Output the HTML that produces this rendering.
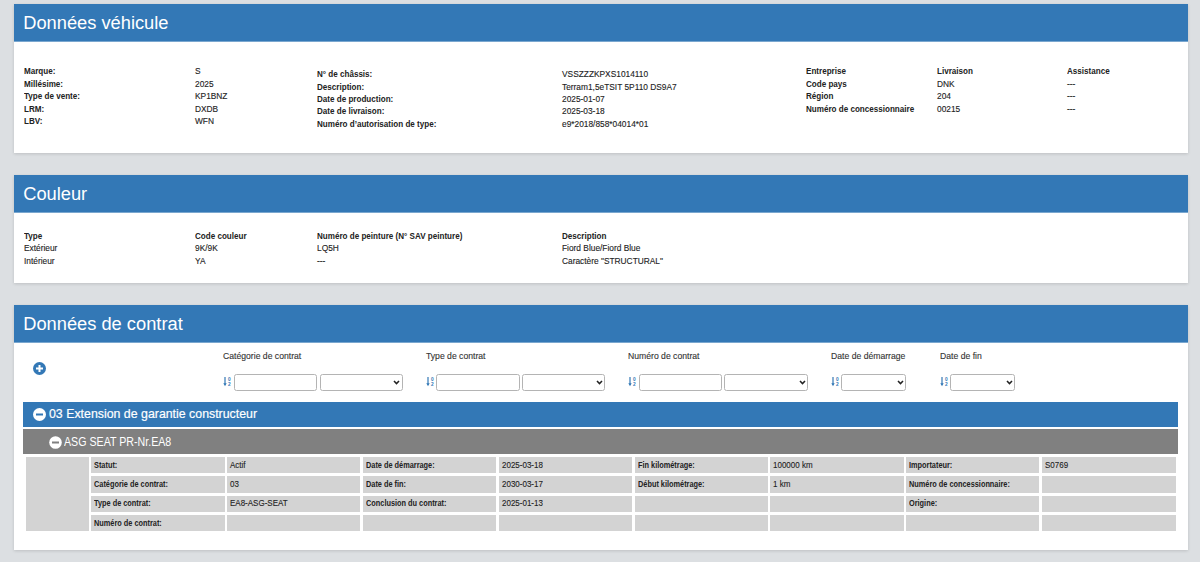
<!DOCTYPE html>
<html><head><meta charset="utf-8"><style>
html,body{margin:0;padding:0;}
body{width:1200px;height:562px;overflow:hidden;background:#dcdfe2;position:relative;font-family:"Liberation Sans",sans-serif;}
.r{position:absolute;}
.t{position:absolute;white-space:nowrap;}
</style></head><body>
<div class="r" style="left:14px;top:4px;width:1174px;height:149px;background:#fff;box-shadow:0 1px 3px rgba(0,0,0,0.14);"></div>
<div class="r" style="left:14px;top:4px;width:1174px;height:37px;background:#3378b6;"></div>
<div class="r" style="left:14px;top:41px;width:1174px;height:1px;background:rgba(51,120,182,0.65);"></div>
<div class="t" style="left:23.2px;top:14px;font-size:18.3px;line-height:18.3px;color:#fff;">Données véhicule</div>
<div class="r" style="left:14px;top:175px;width:1174px;height:108px;background:#fff;box-shadow:0 1px 3px rgba(0,0,0,0.14);"></div>
<div class="r" style="left:14px;top:175px;width:1174px;height:37px;background:#3378b6;"></div>
<div class="r" style="left:14px;top:212px;width:1174px;height:1px;background:rgba(51,120,182,0.65);"></div>
<div class="t" style="left:23.2px;top:185px;font-size:18.3px;line-height:18.3px;color:#fff;">Couleur</div>
<div class="r" style="left:14px;top:305px;width:1174px;height:245px;background:#fff;box-shadow:0 1px 3px rgba(0,0,0,0.14);"></div>
<div class="r" style="left:14px;top:305px;width:1174px;height:37px;background:#3378b6;"></div>
<div class="r" style="left:14px;top:342px;width:1174px;height:1px;background:rgba(51,120,182,0.65);"></div>
<div class="t" style="left:23.2px;top:315px;font-size:18.3px;line-height:18.3px;color:#fff;">Données de contrat</div>
<div class="t" style="left:23.5px;top:67px;font-size:8.9px;line-height:8.9px;font-weight:bold;color:#222;transform:scaleX(0.91);transform-origin:0 0;">Marque:</div>
<div class="t" style="left:194.5px;top:67px;font-size:8.9px;line-height:8.9px;-webkit-text-stroke:0.12px currentColor;color:#222;transform:scaleX(0.94);transform-origin:0 0;">S</div>
<div class="t" style="left:23.5px;top:80px;font-size:8.9px;line-height:8.9px;font-weight:bold;color:#222;transform:scaleX(0.91);transform-origin:0 0;">Millésime:</div>
<div class="t" style="left:194.5px;top:80px;font-size:8.9px;line-height:8.9px;-webkit-text-stroke:0.12px currentColor;color:#222;transform:scaleX(0.94);transform-origin:0 0;">2025</div>
<div class="t" style="left:23.5px;top:92px;font-size:8.9px;line-height:8.9px;font-weight:bold;color:#222;transform:scaleX(0.91);transform-origin:0 0;">Type de vente:</div>
<div class="t" style="left:194.5px;top:92px;font-size:8.9px;line-height:8.9px;-webkit-text-stroke:0.12px currentColor;color:#222;transform:scaleX(0.94);transform-origin:0 0;">KP1BNZ</div>
<div class="t" style="left:23.5px;top:105px;font-size:8.9px;line-height:8.9px;font-weight:bold;color:#222;transform:scaleX(0.91);transform-origin:0 0;">LRM:</div>
<div class="t" style="left:194.5px;top:105px;font-size:8.9px;line-height:8.9px;-webkit-text-stroke:0.12px currentColor;color:#222;transform:scaleX(0.94);transform-origin:0 0;">DXDB</div>
<div class="t" style="left:23.5px;top:117px;font-size:8.9px;line-height:8.9px;font-weight:bold;color:#222;transform:scaleX(0.91);transform-origin:0 0;">LBV:</div>
<div class="t" style="left:194.5px;top:117px;font-size:8.9px;line-height:8.9px;-webkit-text-stroke:0.12px currentColor;color:#222;transform:scaleX(0.94);transform-origin:0 0;">WFN</div>
<div class="t" style="left:317px;top:70px;font-size:8.9px;line-height:8.9px;font-weight:bold;color:#222;transform:scaleX(0.91);transform-origin:0 0;">N° de châssis:</div>
<div class="t" style="left:561.75px;top:70px;font-size:8.9px;line-height:8.9px;-webkit-text-stroke:0.12px currentColor;color:#222;transform:scaleX(0.94);transform-origin:0 0;">VSSZZZKPXS1014110</div>
<div class="t" style="left:317px;top:83px;font-size:8.9px;line-height:8.9px;font-weight:bold;color:#222;transform:scaleX(0.91);transform-origin:0 0;">Description:</div>
<div class="t" style="left:561.75px;top:83px;font-size:8.9px;line-height:8.9px;-webkit-text-stroke:0.12px currentColor;color:#222;transform:scaleX(0.94);transform-origin:0 0;">Terram1,5eTSIT 5P110 DS9A7</div>
<div class="t" style="left:317px;top:95px;font-size:8.9px;line-height:8.9px;font-weight:bold;color:#222;transform:scaleX(0.91);transform-origin:0 0;">Date de production:</div>
<div class="t" style="left:561.75px;top:95px;font-size:8.9px;line-height:8.9px;-webkit-text-stroke:0.12px currentColor;color:#222;transform:scaleX(0.94);transform-origin:0 0;">2025-01-07</div>
<div class="t" style="left:317px;top:107px;font-size:8.9px;line-height:8.9px;font-weight:bold;color:#222;transform:scaleX(0.91);transform-origin:0 0;">Date de livraison:</div>
<div class="t" style="left:561.75px;top:107px;font-size:8.9px;line-height:8.9px;-webkit-text-stroke:0.12px currentColor;color:#222;transform:scaleX(0.94);transform-origin:0 0;">2025-03-18</div>
<div class="t" style="left:317px;top:120px;font-size:8.9px;line-height:8.9px;font-weight:bold;color:#222;transform:scaleX(0.91);transform-origin:0 0;">Numéro d’autorisation de type:</div>
<div class="t" style="left:561.75px;top:120px;font-size:8.9px;line-height:8.9px;-webkit-text-stroke:0.12px currentColor;color:#222;transform:scaleX(0.94);transform-origin:0 0;">e9*2018/858*04014*01</div>
<div class="t" style="left:806.25px;top:67px;font-size:8.9px;line-height:8.9px;font-weight:bold;color:#222;transform:scaleX(0.91);transform-origin:0 0;">Entreprise</div>
<div class="t" style="left:937px;top:67px;font-size:8.9px;line-height:8.9px;font-weight:bold;color:#222;transform:scaleX(0.91);transform-origin:0 0;">Livraison</div>
<div class="t" style="left:1067px;top:67px;font-size:8.9px;line-height:8.9px;font-weight:bold;color:#222;transform:scaleX(0.91);transform-origin:0 0;">Assistance</div>
<div class="t" style="left:806.25px;top:80px;font-size:8.9px;line-height:8.9px;font-weight:bold;color:#222;transform:scaleX(0.91);transform-origin:0 0;">Code pays</div>
<div class="t" style="left:937px;top:80px;font-size:8.9px;line-height:8.9px;-webkit-text-stroke:0.12px currentColor;color:#222;transform:scaleX(0.94);transform-origin:0 0;">DNK</div>
<div class="t" style="left:1067px;top:80px;font-size:8.9px;line-height:8.9px;-webkit-text-stroke:0.12px currentColor;color:#222;transform:scaleX(0.94);transform-origin:0 0;">---</div>
<div class="t" style="left:806.25px;top:92px;font-size:8.9px;line-height:8.9px;font-weight:bold;color:#222;transform:scaleX(0.91);transform-origin:0 0;">Région</div>
<div class="t" style="left:937px;top:92px;font-size:8.9px;line-height:8.9px;-webkit-text-stroke:0.12px currentColor;color:#222;transform:scaleX(0.94);transform-origin:0 0;">204</div>
<div class="t" style="left:1067px;top:92px;font-size:8.9px;line-height:8.9px;-webkit-text-stroke:0.12px currentColor;color:#222;transform:scaleX(0.94);transform-origin:0 0;">---</div>
<div class="t" style="left:806.25px;top:105px;font-size:8.9px;line-height:8.9px;font-weight:bold;color:#222;transform:scaleX(0.91);transform-origin:0 0;">Numéro de concessionnaire</div>
<div class="t" style="left:937px;top:105px;font-size:8.9px;line-height:8.9px;-webkit-text-stroke:0.12px currentColor;color:#222;transform:scaleX(0.94);transform-origin:0 0;">00215</div>
<div class="t" style="left:1067px;top:105px;font-size:8.9px;line-height:8.9px;-webkit-text-stroke:0.12px currentColor;color:#222;transform:scaleX(0.94);transform-origin:0 0;">---</div>
<div class="t" style="left:23.5px;top:232px;font-size:8.9px;line-height:8.9px;font-weight:bold;color:#222;transform:scaleX(0.91);transform-origin:0 0;">Type</div>
<div class="t" style="left:194.5px;top:232px;font-size:8.9px;line-height:8.9px;font-weight:bold;color:#222;transform:scaleX(0.91);transform-origin:0 0;">Code couleur</div>
<div class="t" style="left:317.3px;top:232px;font-size:8.9px;line-height:8.9px;font-weight:bold;color:#222;transform:scaleX(0.91);transform-origin:0 0;">Numéro de peinture (N° SAV peinture)</div>
<div class="t" style="left:561.7px;top:232px;font-size:8.9px;line-height:8.9px;font-weight:bold;color:#222;transform:scaleX(0.91);transform-origin:0 0;">Description</div>
<div class="t" style="left:23.5px;top:244px;font-size:8.9px;line-height:8.9px;-webkit-text-stroke:0.12px currentColor;color:#222;transform:scaleX(0.94);transform-origin:0 0;">Extérieur</div>
<div class="t" style="left:194.5px;top:244px;font-size:8.9px;line-height:8.9px;-webkit-text-stroke:0.12px currentColor;color:#222;transform:scaleX(0.94);transform-origin:0 0;">9K/9K</div>
<div class="t" style="left:317.3px;top:244px;font-size:8.9px;line-height:8.9px;-webkit-text-stroke:0.12px currentColor;color:#222;transform:scaleX(0.94);transform-origin:0 0;">LQ5H</div>
<div class="t" style="left:561.7px;top:244px;font-size:8.9px;line-height:8.9px;-webkit-text-stroke:0.12px currentColor;color:#222;transform:scaleX(0.94);transform-origin:0 0;">Fiord Blue/Fiord Blue</div>
<div class="t" style="left:23.5px;top:257px;font-size:8.9px;line-height:8.9px;-webkit-text-stroke:0.12px currentColor;color:#222;transform:scaleX(0.94);transform-origin:0 0;">Intérieur</div>
<div class="t" style="left:194.5px;top:257px;font-size:8.9px;line-height:8.9px;-webkit-text-stroke:0.12px currentColor;color:#222;transform:scaleX(0.94);transform-origin:0 0;">YA</div>
<div class="t" style="left:317.3px;top:257px;font-size:8.9px;line-height:8.9px;-webkit-text-stroke:0.12px currentColor;color:#222;transform:scaleX(0.94);transform-origin:0 0;">---</div>
<div class="t" style="left:561.7px;top:257px;font-size:8.9px;line-height:8.9px;-webkit-text-stroke:0.12px currentColor;color:#222;transform:scaleX(0.94);transform-origin:0 0;">Caractère "STRUCTURAL"</div>
<svg class="r" style="left:32.5px;top:361.5px" width="13" height="13" viewBox="0 0 13 13"><circle cx="6.5" cy="6.5" r="6.5" fill="#3378b6"/><rect x="3" y="5.5" width="7" height="2" fill="#fff"/><rect x="5.5" y="3" width="2" height="7" fill="#fff"/></svg>
<div class="t" style="left:223px;top:351px;font-size:9.6px;line-height:9.6px;-webkit-text-stroke:0.12px currentColor;color:#333;transform:scaleX(0.9);transform-origin:0 0;">Catégorie de contrat</div>
<svg class="r" style="left:223px;top:377px" width="9" height="10" viewBox="0 0 9 10"><path d="M2 0V7.5" stroke="#3378b6" stroke-width="1.2"/><path d="M0.3 6.3L2 9.2L3.7 6.3Z" fill="#3378b6"/><text x="4.9" y="4" font-size="4.8" font-weight="bold" font-family="Liberation Sans" fill="#3378b6">0</text><text x="4.9" y="9.2" font-size="4.8" font-weight="bold" font-family="Liberation Sans" fill="#3378b6">2</text></svg>
<div class="t" style="left:426.3px;top:351px;font-size:9.6px;line-height:9.6px;-webkit-text-stroke:0.12px currentColor;color:#333;transform:scaleX(0.9);transform-origin:0 0;">Type de contrat</div>
<svg class="r" style="left:426.3px;top:377px" width="9" height="10" viewBox="0 0 9 10"><path d="M2 0V7.5" stroke="#3378b6" stroke-width="1.2"/><path d="M0.3 6.3L2 9.2L3.7 6.3Z" fill="#3378b6"/><text x="4.9" y="4" font-size="4.8" font-weight="bold" font-family="Liberation Sans" fill="#3378b6">0</text><text x="4.9" y="9.2" font-size="4.8" font-weight="bold" font-family="Liberation Sans" fill="#3378b6">2</text></svg>
<div class="t" style="left:628px;top:351px;font-size:9.6px;line-height:9.6px;-webkit-text-stroke:0.12px currentColor;color:#333;transform:scaleX(0.9);transform-origin:0 0;">Numéro de contrat</div>
<svg class="r" style="left:628px;top:377px" width="9" height="10" viewBox="0 0 9 10"><path d="M2 0V7.5" stroke="#3378b6" stroke-width="1.2"/><path d="M0.3 6.3L2 9.2L3.7 6.3Z" fill="#3378b6"/><text x="4.9" y="4" font-size="4.8" font-weight="bold" font-family="Liberation Sans" fill="#3378b6">0</text><text x="4.9" y="9.2" font-size="4.8" font-weight="bold" font-family="Liberation Sans" fill="#3378b6">2</text></svg>
<div class="t" style="left:830.8px;top:351px;font-size:9.6px;line-height:9.6px;-webkit-text-stroke:0.12px currentColor;color:#333;transform:scaleX(0.9);transform-origin:0 0;">Date de démarrage</div>
<svg class="r" style="left:830.8px;top:377px" width="9" height="10" viewBox="0 0 9 10"><path d="M2 0V7.5" stroke="#3378b6" stroke-width="1.2"/><path d="M0.3 6.3L2 9.2L3.7 6.3Z" fill="#3378b6"/><text x="4.9" y="4" font-size="4.8" font-weight="bold" font-family="Liberation Sans" fill="#3378b6">0</text><text x="4.9" y="9.2" font-size="4.8" font-weight="bold" font-family="Liberation Sans" fill="#3378b6">2</text></svg>
<div class="t" style="left:940px;top:351px;font-size:9.6px;line-height:9.6px;-webkit-text-stroke:0.12px currentColor;color:#333;transform:scaleX(0.9);transform-origin:0 0;">Date de fin</div>
<svg class="r" style="left:940px;top:377px" width="9" height="10" viewBox="0 0 9 10"><path d="M2 0V7.5" stroke="#3378b6" stroke-width="1.2"/><path d="M0.3 6.3L2 9.2L3.7 6.3Z" fill="#3378b6"/><text x="4.9" y="4" font-size="4.8" font-weight="bold" font-family="Liberation Sans" fill="#3378b6">0</text><text x="4.9" y="9.2" font-size="4.8" font-weight="bold" font-family="Liberation Sans" fill="#3378b6">2</text></svg>
<div class="r" style="left:234.3px;top:374.2px;width:83.0px;height:16.600000000000023px;background:#fff;border:1.3px solid #b4b4b4;border-radius:2.5px;box-sizing:border-box;"></div>
<div class="r" style="left:319.5px;top:374.2px;width:83.30000000000001px;height:16.600000000000023px;background:#fff;border:1.3px solid #b4b4b4;border-radius:2.5px;box-sizing:border-box;"></div>
<svg class="r" style="left:393.3px;top:380.2px" width="7" height="5" viewBox="0 0 7 5"><path d="M1 1L3.5 3.6L6 1" stroke="#222" stroke-width="1.5" fill="none"/></svg>
<div class="r" style="left:436.3px;top:374.2px;width:83.69999999999999px;height:16.600000000000023px;background:#fff;border:1.3px solid #b4b4b4;border-radius:2.5px;box-sizing:border-box;"></div>
<div class="r" style="left:522.2px;top:374.2px;width:83.29999999999995px;height:16.600000000000023px;background:#fff;border:1.3px solid #b4b4b4;border-radius:2.5px;box-sizing:border-box;"></div>
<svg class="r" style="left:596.0px;top:380.2px" width="7" height="5" viewBox="0 0 7 5"><path d="M1 1L3.5 3.6L6 1" stroke="#222" stroke-width="1.5" fill="none"/></svg>
<div class="r" style="left:638.7px;top:374.2px;width:83.0px;height:16.600000000000023px;background:#fff;border:1.3px solid #b4b4b4;border-radius:2.5px;box-sizing:border-box;"></div>
<div class="r" style="left:724.2px;top:374.2px;width:84.09999999999991px;height:16.600000000000023px;background:#fff;border:1.3px solid #b4b4b4;border-radius:2.5px;box-sizing:border-box;"></div>
<svg class="r" style="left:798.8px;top:380.2px" width="7" height="5" viewBox="0 0 7 5"><path d="M1 1L3.5 3.6L6 1" stroke="#222" stroke-width="1.5" fill="none"/></svg>
<div class="r" style="left:841.3px;top:374.2px;width:65.0px;height:16.600000000000023px;background:#fff;border:1.3px solid #b4b4b4;border-radius:2.5px;box-sizing:border-box;"></div>
<svg class="r" style="left:896.8px;top:380.2px" width="7" height="5" viewBox="0 0 7 5"><path d="M1 1L3.5 3.6L6 1" stroke="#222" stroke-width="1.5" fill="none"/></svg>
<div class="r" style="left:950px;top:374.2px;width:65px;height:16.600000000000023px;background:#fff;border:1.3px solid #b4b4b4;border-radius:2.5px;box-sizing:border-box;"></div>
<svg class="r" style="left:1005.5px;top:380.2px" width="7" height="5" viewBox="0 0 7 5"><path d="M1 1L3.5 3.6L6 1" stroke="#222" stroke-width="1.5" fill="none"/></svg>
<div class="r" style="left:23px;top:402px;width:1155px;height:25px;background:#3378b6;"></div>
<svg class="r" style="left:33px;top:408px" width="13" height="13" viewBox="0 0 13 13"><circle cx="6.5" cy="6.5" r="6.5" fill="#fff"/><rect x="3" y="5.5" width="7" height="2" fill="#3378b6"/></svg>
<div class="t" style="left:48.5px;top:407px;font-size:13.5px;line-height:13.5px;color:#fff;-webkit-text-stroke:0.2px #fff;transform:scaleX(0.915);transform-origin:0 0;">03 Extension de garantie constructeur</div>
<div class="r" style="left:23px;top:429px;width:1155px;height:25px;background:#808080;"></div>
<svg class="r" style="left:48.5px;top:435.7px" width="13" height="13" viewBox="0 0 13 13"><circle cx="6.5" cy="6.5" r="6.3" fill="#fff"/><rect x="3" y="5.5" width="7" height="2" fill="#808080"/></svg>
<div class="t" style="left:64.2px;top:436px;font-size:12.1px;line-height:12.1px;color:#fff;transform:scaleX(0.88);transform-origin:0 0;">ASG SEAT PR-Nr.EA8</div>
<div class="r" style="left:26.2px;top:457.2px;width:62.8px;height:74.19999999999999px;background:#d3d3d3;"></div>
<div class="r" style="left:91.4px;top:457.2px;width:133.2px;height:15.800000000000011px;background:#d3d3d3;"></div>
<div class="t" style="left:94.4px;top:461px;font-size:9.2px;line-height:9.2px;font-weight:bold;color:#222;transform:scaleX(0.8);transform-origin:0 0;">Statut:</div>
<div class="r" style="left:227.2px;top:457.2px;width:133.2px;height:15.800000000000011px;background:#d3d3d3;"></div>
<div class="t" style="left:230.2px;top:461px;font-size:9.2px;line-height:9.2px;-webkit-text-stroke:0.12px currentColor;color:#222;transform:scaleX(0.87);transform-origin:0 0;">Actif</div>
<div class="r" style="left:363.0px;top:457.2px;width:133.2px;height:15.800000000000011px;background:#d3d3d3;"></div>
<div class="t" style="left:366.0px;top:461px;font-size:9.2px;line-height:9.2px;font-weight:bold;color:#222;transform:scaleX(0.8);transform-origin:0 0;">Date de démarrage:</div>
<div class="r" style="left:498.8px;top:457.2px;width:133.2px;height:15.800000000000011px;background:#d3d3d3;"></div>
<div class="t" style="left:501.8px;top:461px;font-size:9.2px;line-height:9.2px;-webkit-text-stroke:0.12px currentColor;color:#222;transform:scaleX(0.87);transform-origin:0 0;">2025-03-18</div>
<div class="r" style="left:634.6px;top:457.2px;width:133.19999999999993px;height:15.800000000000011px;background:#d3d3d3;"></div>
<div class="t" style="left:637.6px;top:461px;font-size:9.2px;line-height:9.2px;font-weight:bold;color:#222;transform:scaleX(0.8);transform-origin:0 0;">Fin kilométrage:</div>
<div class="r" style="left:770.4px;top:457.2px;width:133.20000000000005px;height:15.800000000000011px;background:#d3d3d3;"></div>
<div class="t" style="left:773.4px;top:461px;font-size:9.2px;line-height:9.2px;-webkit-text-stroke:0.12px currentColor;color:#222;transform:scaleX(0.87);transform-origin:0 0;">100000 km</div>
<div class="r" style="left:906.2px;top:457.2px;width:133.20000000000005px;height:15.800000000000011px;background:#d3d3d3;"></div>
<div class="t" style="left:909.2px;top:461px;font-size:9.2px;line-height:9.2px;font-weight:bold;color:#222;transform:scaleX(0.8);transform-origin:0 0;">Importateur:</div>
<div class="r" style="left:1042.0px;top:457.2px;width:134.0px;height:15.800000000000011px;background:#d3d3d3;"></div>
<div class="t" style="left:1045.0px;top:461px;font-size:9.2px;line-height:9.2px;-webkit-text-stroke:0.12px currentColor;color:#222;transform:scaleX(0.87);transform-origin:0 0;">S0769</div>
<div class="r" style="left:91.4px;top:476.1px;width:133.2px;height:16.5px;background:#d3d3d3;"></div>
<div class="t" style="left:94.4px;top:480px;font-size:9.2px;line-height:9.2px;font-weight:bold;color:#222;transform:scaleX(0.8);transform-origin:0 0;">Catégorie de contrat:</div>
<div class="r" style="left:227.2px;top:476.1px;width:133.2px;height:16.5px;background:#d3d3d3;"></div>
<div class="t" style="left:230.2px;top:480px;font-size:9.2px;line-height:9.2px;-webkit-text-stroke:0.12px currentColor;color:#222;transform:scaleX(0.87);transform-origin:0 0;">03</div>
<div class="r" style="left:363.0px;top:476.1px;width:133.2px;height:16.5px;background:#d3d3d3;"></div>
<div class="t" style="left:366.0px;top:480px;font-size:9.2px;line-height:9.2px;font-weight:bold;color:#222;transform:scaleX(0.8);transform-origin:0 0;">Date de fin:</div>
<div class="r" style="left:498.8px;top:476.1px;width:133.2px;height:16.5px;background:#d3d3d3;"></div>
<div class="t" style="left:501.8px;top:480px;font-size:9.2px;line-height:9.2px;-webkit-text-stroke:0.12px currentColor;color:#222;transform:scaleX(0.87);transform-origin:0 0;">2030-03-17</div>
<div class="r" style="left:634.6px;top:476.1px;width:133.19999999999993px;height:16.5px;background:#d3d3d3;"></div>
<div class="t" style="left:637.6px;top:480px;font-size:9.2px;line-height:9.2px;font-weight:bold;color:#222;transform:scaleX(0.8);transform-origin:0 0;">Début kilométrage:</div>
<div class="r" style="left:770.4px;top:476.1px;width:133.20000000000005px;height:16.5px;background:#d3d3d3;"></div>
<div class="t" style="left:773.4px;top:480px;font-size:9.2px;line-height:9.2px;-webkit-text-stroke:0.12px currentColor;color:#222;transform:scaleX(0.87);transform-origin:0 0;">1 km</div>
<div class="r" style="left:906.2px;top:476.1px;width:133.20000000000005px;height:16.5px;background:#d3d3d3;"></div>
<div class="t" style="left:909.2px;top:480px;font-size:9.2px;line-height:9.2px;font-weight:bold;color:#222;transform:scaleX(0.8);transform-origin:0 0;">Numéro de concessionnaire:</div>
<div class="r" style="left:1042.0px;top:476.1px;width:134.0px;height:16.5px;background:#d3d3d3;"></div>
<div class="r" style="left:91.4px;top:496px;width:133.2px;height:15.800000000000011px;background:#d3d3d3;"></div>
<div class="t" style="left:94.4px;top:499px;font-size:9.2px;line-height:9.2px;font-weight:bold;color:#222;transform:scaleX(0.8);transform-origin:0 0;">Type de contrat:</div>
<div class="r" style="left:227.2px;top:496px;width:133.2px;height:15.800000000000011px;background:#d3d3d3;"></div>
<div class="t" style="left:230.2px;top:499px;font-size:9.2px;line-height:9.2px;-webkit-text-stroke:0.12px currentColor;color:#222;transform:scaleX(0.87);transform-origin:0 0;">EA8-ASG-SEAT</div>
<div class="r" style="left:363.0px;top:496px;width:133.2px;height:15.800000000000011px;background:#d3d3d3;"></div>
<div class="t" style="left:366.0px;top:499px;font-size:9.2px;line-height:9.2px;font-weight:bold;color:#222;transform:scaleX(0.8);transform-origin:0 0;">Conclusion du contrat:</div>
<div class="r" style="left:498.8px;top:496px;width:133.2px;height:15.800000000000011px;background:#d3d3d3;"></div>
<div class="t" style="left:501.8px;top:499px;font-size:9.2px;line-height:9.2px;-webkit-text-stroke:0.12px currentColor;color:#222;transform:scaleX(0.87);transform-origin:0 0;">2025-01-13</div>
<div class="r" style="left:634.6px;top:496px;width:133.19999999999993px;height:15.800000000000011px;background:#d3d3d3;"></div>
<div class="r" style="left:770.4px;top:496px;width:133.20000000000005px;height:15.800000000000011px;background:#d3d3d3;"></div>
<div class="r" style="left:906.2px;top:496px;width:133.20000000000005px;height:15.800000000000011px;background:#d3d3d3;"></div>
<div class="t" style="left:909.2px;top:499px;font-size:9.2px;line-height:9.2px;font-weight:bold;color:#222;transform:scaleX(0.8);transform-origin:0 0;">Origine:</div>
<div class="r" style="left:1042.0px;top:496px;width:134.0px;height:15.800000000000011px;background:#d3d3d3;"></div>
<div class="r" style="left:91.4px;top:515px;width:133.2px;height:16.399999999999977px;background:#d3d3d3;"></div>
<div class="t" style="left:94.4px;top:519px;font-size:9.2px;line-height:9.2px;font-weight:bold;color:#222;transform:scaleX(0.8);transform-origin:0 0;">Numéro de contrat:</div>
<div class="r" style="left:227.2px;top:515px;width:133.2px;height:16.399999999999977px;background:#d3d3d3;"></div>
<div class="r" style="left:363.0px;top:515px;width:133.2px;height:16.399999999999977px;background:#d3d3d3;"></div>
<div class="r" style="left:498.8px;top:515px;width:133.2px;height:16.399999999999977px;background:#d3d3d3;"></div>
<div class="r" style="left:634.6px;top:515px;width:133.19999999999993px;height:16.399999999999977px;background:#d3d3d3;"></div>
<div class="r" style="left:770.4px;top:515px;width:133.20000000000005px;height:16.399999999999977px;background:#d3d3d3;"></div>
<div class="r" style="left:906.2px;top:515px;width:133.20000000000005px;height:16.399999999999977px;background:#d3d3d3;"></div>
<div class="r" style="left:1042.0px;top:515px;width:134.0px;height:16.399999999999977px;background:#d3d3d3;"></div>
</body></html>
